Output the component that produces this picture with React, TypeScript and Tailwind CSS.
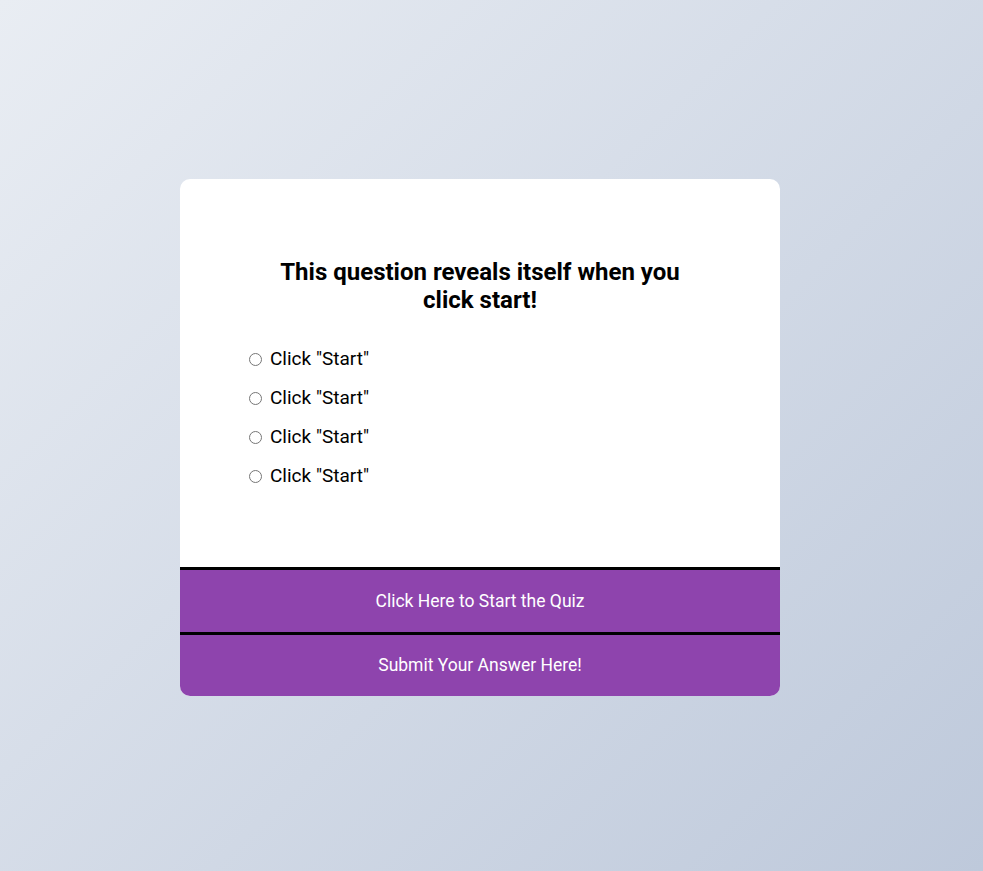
import React from "react";

export default function App() {
  const options = [1, 2, 3, 4];
  return (
    <div
      className="min-h-screen w-full flex items-center justify-center pr-[23px] bg-[linear-gradient(135deg,#e9edf3_0%,#bec9db_100%)]"
      style={{ fontFamily: "Roboto, 'Liberation Sans', sans-serif" }}
    >
      <div className="w-[600px] rounded-[10px] overflow-hidden bg-white mt-[4px]">
        <div className="pt-[79px] pb-[71px] px-[32px]">
          <h2 className="mx-auto w-[410px] text-center text-[24px] leading-[28px] font-bold text-black">
            This question reveals itself when you click start!
          </h2>
          <ul className="mt-[26px] pl-[37px]">
            {options.map((i) => (
              <li key={i} className="h-[39px] flex items-center text-[19px] text-black">
                <input type="radio" name="ans" className="m-0 w-[13px] h-[13px] mr-[8px]" />
                <label>Click "Start"</label>
              </li>
            ))}
          </ul>
        </div>
        <button className="block w-full h-[65px] border-t-[3px] border-black bg-[#8e44ad] text-white text-[17.5px]">
          Click Here to Start the Quiz
        </button>
        <button className="block w-full h-[64px] border-t-[3px] border-black bg-[#8e44ad] text-white text-[17.5px]">
          Submit Your Answer Here!
        </button>
      </div>
    </div>
  );
}
